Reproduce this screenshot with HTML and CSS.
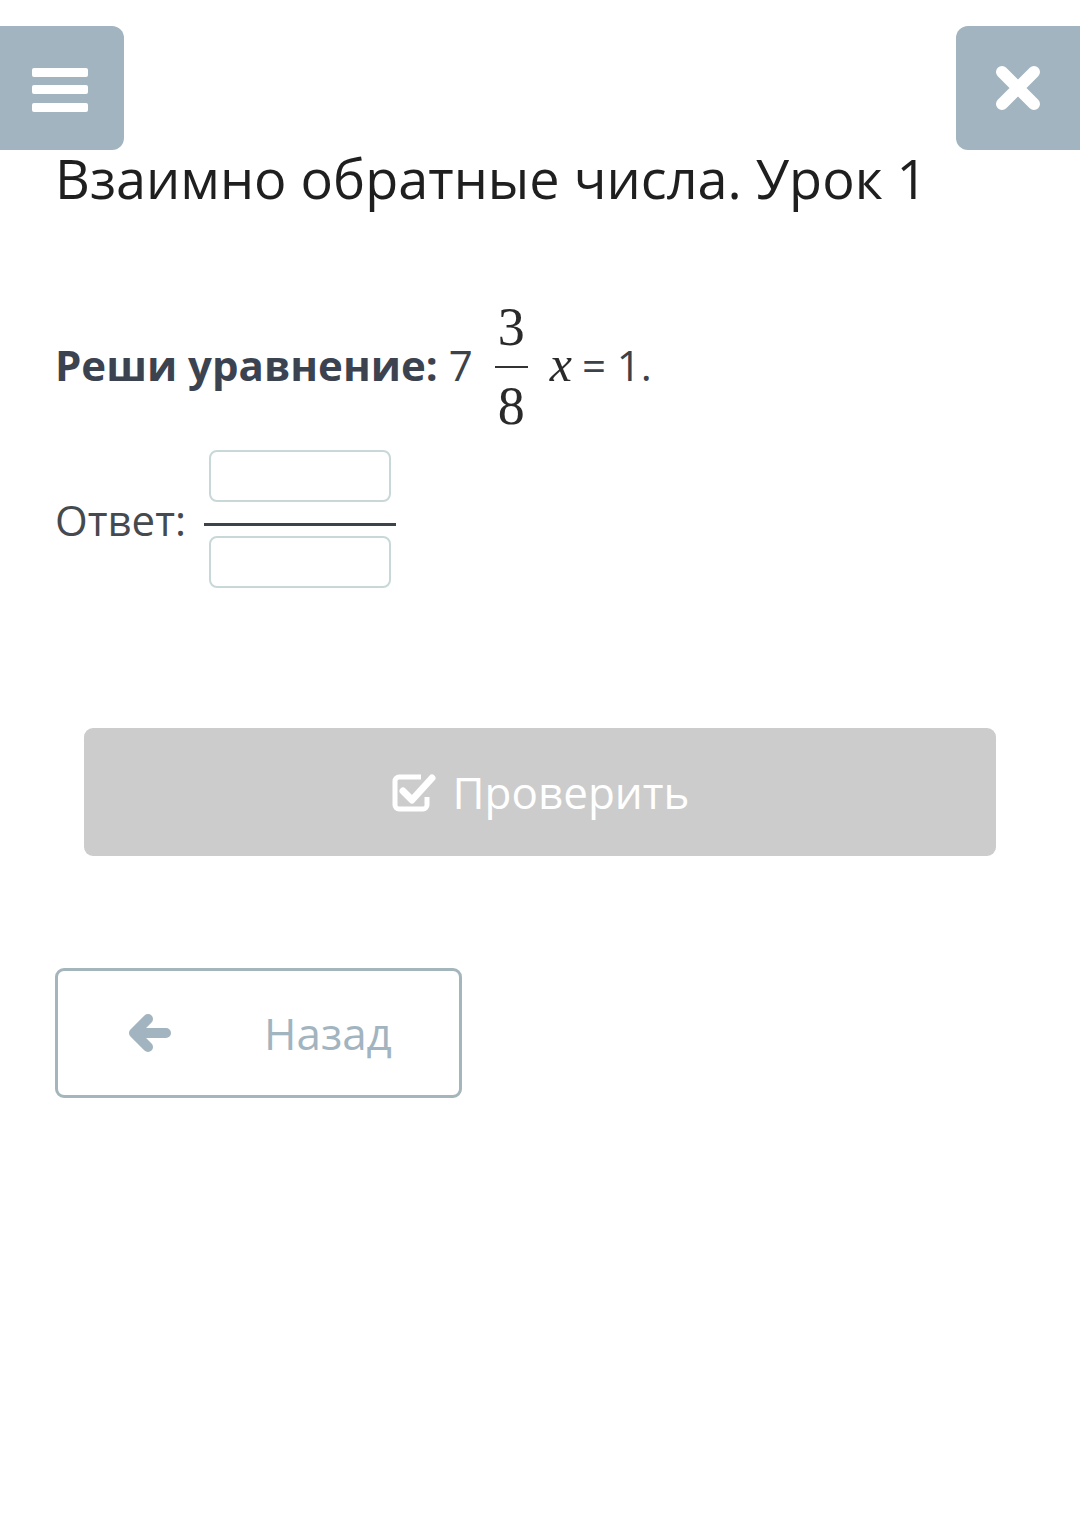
FILE: index.html
```html
<!DOCTYPE html>
<html lang="ru">

<head>
    <meta charset="UTF-8">
    <meta name="viewport" content="width=device-width, initial-scale=1.0">
    <title>Взаимно обратные числа. Урок 1</title>
    <link rel="stylesheet" href="styles.css">
</head>

<body>
    <div class="topbar">
        <button class="menu-btn" aria-label="Меню">
            <svg width="58" height="48" viewBox="0 0 58 48">
                <rect x="1" y="4" width="56" height="9" rx="2" fill="#fff" />
                <rect x="1" y="21" width="56" height="9" rx="2" fill="#fff" />
                <rect x="1" y="39" width="56" height="9" rx="2" fill="#fff" />
            </svg>
        </button>
        <button class="close-btn" aria-label="Закрыть">
            <svg width="48" height="48" viewBox="0 0 48 48">
                <path d="M8 8 L40 40 M40 8 L8 40" stroke="#fff" stroke-width="12" stroke-linecap="round" />
            </svg>
        </button>
    </div>

    <div class="content">
        <h1 class="title">Взаимно обратные числа. Урок 1</h1>

        <div class="task"><b>Реши уравнение:</b> 7<span class="frac"><span class="num">3</span><span class="den">8</span></span><span class="var">x</span>= 1.</div>

        <div class="answer">
            <span class="answer-label">Ответ:</span>
            <span class="answer-frac">
                <input class="answer-box" type="text">
                <span class="answer-line"></span>
                <input class="answer-box" type="text">
            </span>
        </div>

        <button class="check-btn">
            <svg width="46" height="42" viewBox="0 0 46 42">
                <path d="M30 6 H8 a4 4 0 0 0 -4 4 V34 a4 4 0 0 0 4 4 H32 a4 4 0 0 0 4 -4 V26" fill="none" stroke="#fff" stroke-width="5" />
                <path d="M12 20 L21 29 L41 7" fill="none" stroke="#fff" stroke-width="7" stroke-linecap="round" stroke-linejoin="round" />
            </svg>
            <span>Проверить</span>
        </button>

        <button class="back-btn">
            <svg width="46" height="40" viewBox="0 0 46 40">
                <path d="M22 6 L8 20 L22 34 M8 20 H40" fill="none" stroke="#a2b4bf" stroke-width="10" stroke-linecap="round" stroke-linejoin="round" />
            </svg>
            <span>Назад</span>
        </button>
    </div>
</body>

</html>
```

FILE: styles.css
```css
body {
    margin: 0;
    font-family: "Open Sans", Arial, sans-serif;
    background-color: #fff;
    color: #222;
}

button {
    font-family: inherit;
    border: none;
    cursor: pointer;
}

.topbar {
    display: flex;
    justify-content: space-between;
    padding-top: 26px;
}

.menu-btn,
.close-btn {
    width: 124px;
    height: 124px;
    background-color: #a2b4c0;
    display: flex;
    align-items: center;
    justify-content: center;
    padding: 0;
}

.menu-btn {
    border-radius: 0 12px 12px 0;
    padding-right: 4px;
}

.close-btn {
    border-radius: 12px 0 0 12px;
}

.content {
    padding: 0 55px;
}

.title {
    font-size: 54px;
    font-weight: 400;
    margin: -6px 0 0;
    line-height: 68px;
    color: #1f1f1f;
}

.task {
    margin-top: 79px;
    font-size: 42px;
    line-height: 146px;
    height: 146px;
    color: #3c424a;
}

.task b {
    font-weight: 700;
    color: #3b4350;
}

.frac {
    display: inline-block;
    vertical-align: middle;
    text-align: center;
    margin: -6px 22px 0 22px;
    font-family: "Liberation Serif", serif;
    font-size: 54px;
    line-height: 56px;
    color: #2a2a2a;
}

.frac .num,
.frac .den {
    display: block;
    padding: 0 3px;
}

.frac .num {
    padding-bottom: 11px;
    border-bottom: 2px solid #333;
}

.frac .den {
    padding-top: 10px;
}

.var {
    font-family: "Liberation Serif", serif;
    font-style: italic;
    font-size: 50px;
    color: #2a2a2a;
    margin-right: 10px;
}

.answer {
    display: flex;
    align-items: center;
    margin-top: 13px;
}

.answer-label {
    font-size: 42px;
    color: #454a4e;
    margin-right: 18px;
}

.answer-frac {
    display: inline-flex;
    flex-direction: column;
    align-items: center;
}

.answer-box {
    width: 182px;
    height: 52px;
    box-sizing: border-box;
    border: 2px solid #c8d8d8;
    border-radius: 8px;
    margin: 0;
}

.answer-line {
    width: 192px;
    height: 3px;
    background-color: #3d4449;
    margin: 21px 0 10px;
}

.check-btn {
    display: flex;
    align-items: center;
    justify-content: center;
    gap: 16px;
    width: 912px;
    height: 128px;
    margin: 140px 0 0 29px;
    background-color: #cccccc;
    border-radius: 9px;
    color: #fff;
    font-size: 44px;
}

.back-btn {
    display: flex;
    align-items: center;
    width: 407px;
    height: 130px;
    box-sizing: border-box;
    margin-top: 112px;
    padding-left: 68px;
    background-color: #fff;
    border: 3px solid #a4b6bb;
    border-radius: 9px;
    color: #a2b4bf;
    font-size: 44px;
}

.back-btn span {
    margin-left: 92px;
}
```
